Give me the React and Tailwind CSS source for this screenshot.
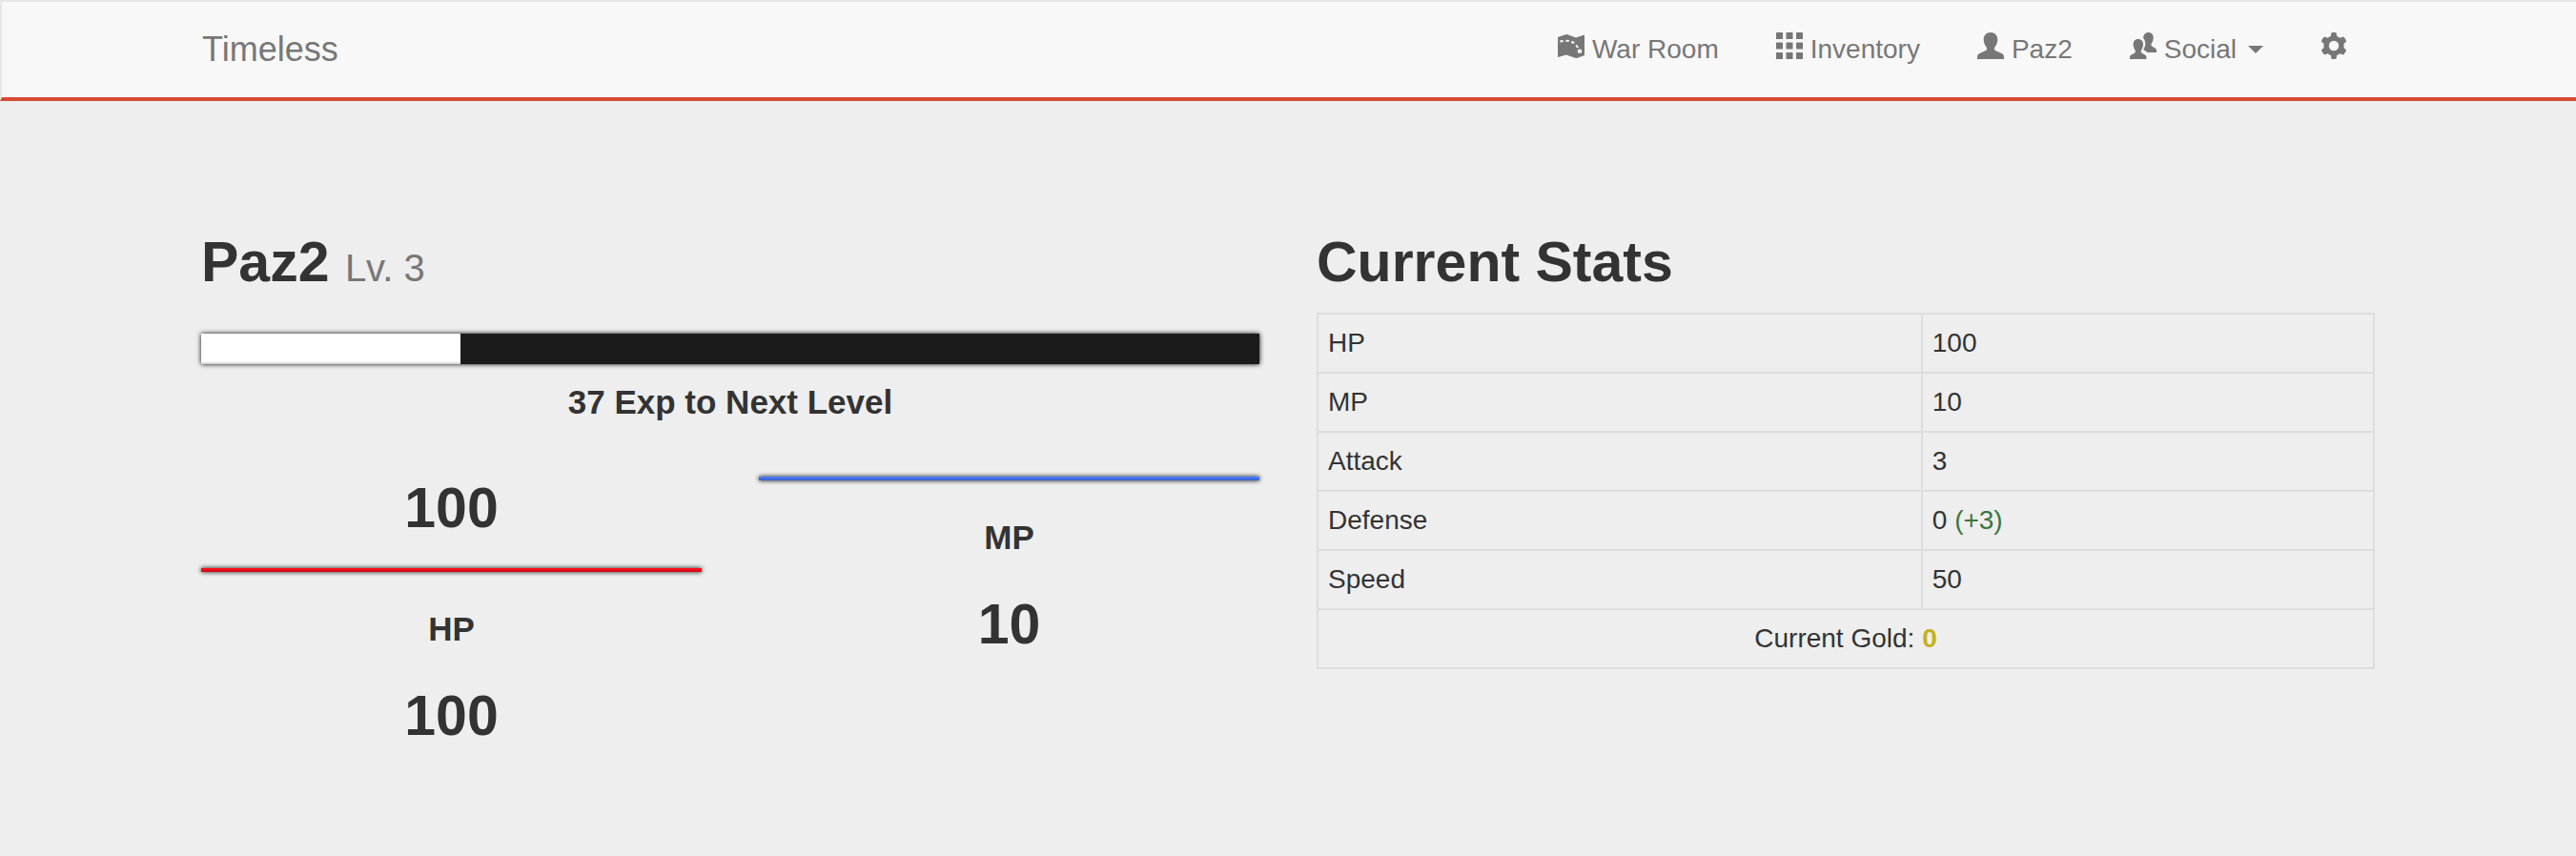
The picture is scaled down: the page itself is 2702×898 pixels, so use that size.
const stats = [
  { label: 'HP', value: '100' },
  { label: 'MP', value: '10' },
  { label: 'Attack', value: '3' },
  { label: 'Defense', value: '0', bonus: '(+3)' },
  { label: 'Speed', value: '50' },
];

const exp = { gained: 12, needed: 49 };

function Icon({ children }) {
  return (
    <svg viewBox="0 0 28 28" className="mb-2 size-7 shrink-0" fill="currentColor" aria-hidden="true">
      {children}
    </svg>
  );
}

function MapIcon() {
  return (
    <Icon>
      <path d="M0 5 L9 2 Q10 2 11 2.500 L19 5.500 L28 2.500 V24 L20 27 Q19 27.200 18 26.800 L9 23.500 L0 26 Z" />
      <path d="M0 10 C6 8.300 14 8 18 12 Q20.500 14.500 21.500 17" fill="none" stroke="#f8f8f8" strokeWidth="2" strokeDasharray="3.400 2.600" strokeDashoffset="3.600" />
      <circle cx="23" cy="19.800" r="2.300" fill="#f8f8f8" />
    </Icon>
  );
}

function GridIcon() {
  return (
    <Icon>
      {[0, 10.5, 21].map((y) =>
        [0, 10.5, 21].map((x) => <rect key={`${x}-${y}`} x={x} y={y} width="7" height="7" rx="0.600" />)
      )}
    </Icon>
  );
}

function UserIcon() {
  return (
    <Icon>
      <path d="M14 0 C18.500 0 21.300 3 21.300 7.500 C21.300 11 19.800 14 18 16 C17.600 17.800 18.200 18.700 19.500 19.300 L25.500 22 C27.300 22.900 28 24 28 26 V28 H0 V26 C0 24 0.700 22.900 2.500 22 L8.500 19.300 C9.800 18.700 10.400 17.800 10 16 C8.200 14 6.700 11 6.700 7.500 C6.700 3 9.500 0 14 0 Z" />
    </Icon>
  );
}

function FriendsIcon() {
  return (
    <Icon>
      <path d="M19.500 0 C22.700 0 24.700 2.300 24.700 5.500 C24.700 8 23.700 10.500 22.500 12 C22.300 13.500 22.600 14.200 23.500 14.700 L26.500 16.400 C27.600 17.100 28 17.800 28 19 V21 H18.300 C17.500 20 16.500 19.500 15 18.800 C14.500 18.400 14.500 17.800 14.700 17 C15.800 15.500 16.300 13.500 16.300 11.800 C16.300 9.500 15.600 7.500 14.200 6.200 C14.200 2.300 16.300 0 19.500 0 Z" />
      <path d="M8.800 7 C12 7 14 9.300 14 12.500 C14 15 13.100 17.300 11.800 19 C11.600 20.500 11.900 21.200 12.800 21.700 L15.800 23.400 C17 24.100 17.400 24.800 17.400 26 V28 H0 V26 C0 24.800 0.500 24.100 1.700 23.400 L4.800 21.700 C5.700 21.200 6 20.500 5.800 19 C4.500 17.300 3.600 15 3.600 12.500 C3.600 9.300 5.600 7 8.800 7 Z" />
    </Icon>
  );
}

function CogIcon() {
  return (
    <Icon>
      <path
        fillRule="evenodd"
        d="M11.500 0.300 Q14 -0.200 16.500 0.300 L17.200 4 Q19 4.600 20.400 5.700 L24 4.600 Q26.300 6.600 27.100 9.400 L24.400 12 Q24.700 14 24.400 16 L27.100 18.600 Q26.300 21.400 24 23.400 L20.400 22.300 Q19 23.400 17.200 24 L16.500 27.700 Q14 28.200 11.500 27.700 L10.800 24 Q9 23.400 7.600 22.300 L4 23.400 Q1.700 21.400 0.900 18.600 L3.600 16 Q3.300 14 3.600 12 L0.900 9.400 Q1.700 6.600 4 4.600 L7.600 5.700 Q9 4.600 10.800 4 Z M14 8.800 A5.200 5.200 0 1 0 14 19.200 A5.200 5.200 0 1 0 14 8.800 Z"
      />
    </Icon>
  );
}

const heading = 'text-[59px] leading-[66px] font-bold';
const subheading = 'text-[35px] leading-10 font-bold';
const navLink = 'flex items-center gap-2 p-[30px] leading-10';

function Meter({ label, bar, current, max }) {
  return (
    <div className="text-center">
      {current && <h2 className={`mb-[30px] ${heading}`}>{current}</h2>}
      <div className={`h-1 shadow-[inset_0_-2px_0_rgba(0,0,0,0.15),0_0_5px_#000] ${bar}`} />
      <h4 className={`mt-10 ${subheading}`}>{label}</h4>
      <h2 className={`mt-[38px] ${heading}`}>{max}</h2>
    </div>
  );
}

export default function App() {
  return (
    <div className="min-h-screen bg-[#eee] font-['Liberation_Sans',Arial,sans-serif] text-[28px] leading-10 text-[#333]">
      <nav className="border-2 border-r-0 border-b-4 border-[#e7e7e7] border-b-[#d64b34] bg-[#f8f8f8] text-[#777]">
        <div className="mx-auto flex h-[100px] max-w-[2280px] items-center justify-between">
          <a href="#home" className="text-[36px]">Timeless</a>
          <div className="flex items-center">
            <a href="#war-room" className={navLink}><MapIcon />War Room</a>
            <a href="#inventory" className={navLink}><GridIcon />Inventory</a>
            <a href="#profile" className={navLink}><UserIcon />Paz2</a>
            <button type="button" className={navLink}>
              <FriendsIcon />Social
              <svg viewBox="0 0 16 8" className="ml-1 h-2 w-4" fill="currentColor" aria-hidden="true">
                <path d="M0 0H16L8 8Z" />
              </svg>
            </button>
            <button type="button" aria-label="Settings" className={navLink}><CogIcon /></button>
          </div>
        </div>
      </nav>

      <main className="mx-auto grid max-w-[2280px] grid-cols-2 gap-[60px] pt-[136px]">
        <section>
          <h2 className={heading}>
            Paz2 <small className="text-[40px] leading-10 font-normal text-[#777]">Lv. 3</small>
          </h2>
          <div className="mt-[42px] flex h-8 bg-[#1b1b1b] shadow-[0_0_5px_#000]">
            <div
              className="bg-white shadow-[inset_0_-2px_0_rgba(0,0,0,0.15)]"
              style={{ width: `${(exp.gained / exp.needed) * 100}%` }}
            />
          </div>
          <h4 className={`mt-5 text-center ${subheading}`}>37 Exp to Next Level</h4>

          <div className="mt-[58px] grid grid-cols-2 items-start gap-[60px]">
            <Meter label="HP" bar="bg-[#fb0d1b]" current="100" max="100" />
            <Meter label="MP" bar="bg-[#4a78fb]" max="10" />
          </div>
        </section>

        <section>
          <h2 className={heading}>Current Stats</h2>
          <table className="mt-5 w-full table-fixed border-collapse border-2 border-[#ddd]">
            <colgroup>
              <col className="w-[57.2%]" />
              <col />
            </colgroup>
            <tbody>
              {stats.map((s) => (
                <tr key={s.label}>
                  <th scope="row" className="border-2 border-[#ddd] p-[10px] text-left font-normal">{s.label}</th>
                  <td className="border-2 border-[#ddd] p-[10px]">
                    {s.value}
                    {s.bonus && <span className="text-[#3c763d]"> {s.bonus}</span>}
                  </td>
                </tr>
              ))}
              <tr>
                <td colSpan={2} className="border-2 border-[#ddd] p-[10px] text-center">
                  Current Gold: <strong className="text-[#c4b120]">0</strong>
                </td>
              </tr>
            </tbody>
          </table>
        </section>
      </main>
    </div>
  );
}
